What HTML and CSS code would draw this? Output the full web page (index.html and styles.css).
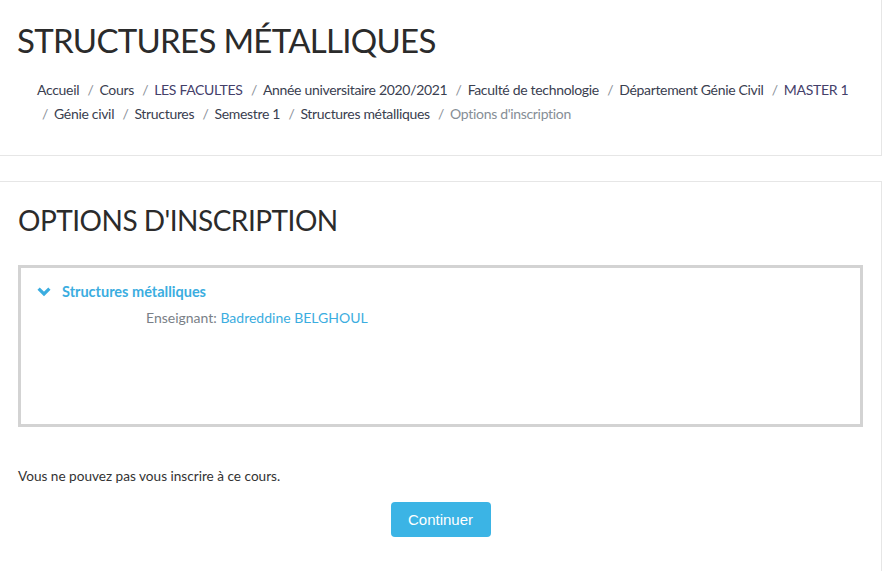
FILE: index.html
```html
<!DOCTYPE html>
<html lang="fr">
<head>
<meta charset="utf-8">
<title>Structures métalliques</title>
<link rel="stylesheet" href="styles.css">
</head>
<body>
<header class="card page-header">
  <h1 class="page-title">STRUCTURES MÉTALLIQUES</h1>
  <nav class="breadcrumb">
    <span class="item first"><a href="#">Accueil</a></span>
    <span class="item"><a href="#">Cours</a></span>
    <span class="item"><a href="#" class="visited">LES FACULTES</a></span>
    <span class="item"><a href="#">Année universitaire 2020/2021</a></span>
    <span class="item"><a href="#">Faculté de technologie</a></span>
    <span class="item"><a href="#">Département Génie Civil</a></span>
    <span class="item"><a href="#" class="visited">MASTER 1</a></span>
    <span class="item"><a href="#">Génie civil</a></span>
    <span class="item"><a href="#">Structures</a></span>
    <span class="item"><a href="#">Semestre 1</a></span>
    <span class="item"><a href="#">Structures métalliques</a></span>
    <span class="item current">Options d'inscription</span>
  </nav>
</header>
<main class="card content">
  <h2 class="section-title">OPTIONS D'INSCRIPTION</h2>
  <div class="course-box">
    <div class="course-name">
      <svg class="chevron" viewBox="0 0 14 10" width="14" height="10"><path d="M1.6 1.6 L7 7 L12.4 1.6" fill="none" stroke="#3bade0" stroke-width="3.2"/></svg>
      <a href="#">Structures métalliques</a>
    </div>
    <div class="teacher"><span class="label">Enseignant:</span> <a href="#">Badreddine BELGHOUL</a></div>
  </div>
  <p class="notice">Vous ne pouvez pas vous inscrire à ce cours.</p>
  <div class="actions"><button class="btn">Continuer</button></div>
</main>
</body>
</html>
```
FILE: styles.css
```css
html, body {
  margin: 0;
  padding: 0;
  background: #fff;
}
body {
  font-family: Lato, "Open Sans", sans-serif;
  color: #373a3c;
  width: 892px;
  overflow: hidden;
}
a { text-decoration: none; }

.card {
  width: 882px;
  background: #fff;
  box-sizing: border-box;
}
.page-header {
  border-right: 1px solid #e6e6e6;
  border-bottom: 1px solid #e6e6e6;
  height: 156px;
  padding: 18px 0 0 17px;
}
.page-title {
  margin: 0;
  font-weight: 400;
  font-size: 33px;
  letter-spacing: -0.7px;
  line-height: 44px;
  color: #2b2b2b;
}
.breadcrumb {
  margin: 16px 0 0 20px;
  font-size: 14px;
  letter-spacing: -0.32px;
  line-height: 24px;
  width: 830px;
}
.breadcrumb .item {
  white-space: nowrap;
}
.breadcrumb .item::before {
  content: "/";
  color: #8a8f98;
  padding: 0 6px 0 5px;
}
.breadcrumb .item.first::before {
  content: none;
}
.breadcrumb a { color: #3a4050; }
.breadcrumb a.visited { color: #44406a; }
.breadcrumb .current { color: #868e96; }

.content {
  margin-top: 25px;
  border-top: 1px solid #e6e6e6;
  border-right: 1px solid #e6e6e6;
  height: 400px;
  padding: 19px 0 0 18px;
}
.section-title {
  margin: 0;
  font-weight: 400;
  font-size: 28px;
  letter-spacing: -0.5px;
  line-height: 38px;
  color: #2b2b2b;
}
.course-box {
  margin-top: 26px;
  width: 845px;
  height: 162px;
  box-sizing: border-box;
  border: 3px solid #d3d3d3;
  padding: 13px 0 0 16px;
}
.course-name {
  display: flex;
  align-items: center;
  gap: 11px;
  font-size: 14.5px;
  font-weight: 700;
  line-height: 22px;
}
.course-name a { color: #3bade0; }
.teacher {
  margin: 4px 0 0 109px;
  font-size: 14px;
  line-height: 22px;
}
.teacher .label { color: #7a7f87; }
.teacher a { color: #3bade0; }
.notice {
  margin: 38px 0 0;
  font-size: 13.6px;
  line-height: 22px;
  color: #333;
}
.actions {
  display: flex;
  justify-content: center;
  width: 845px;
  margin-top: 15px;
}
.btn {
  background: #3bb4e5;
  color: #fff;
  border: none;
  border-radius: 4px;
  width: 100px;
  height: 35px;
  font-family: "Liberation Sans", Arial, sans-serif;
  font-size: 15px;
  padding: 0;
}
```
